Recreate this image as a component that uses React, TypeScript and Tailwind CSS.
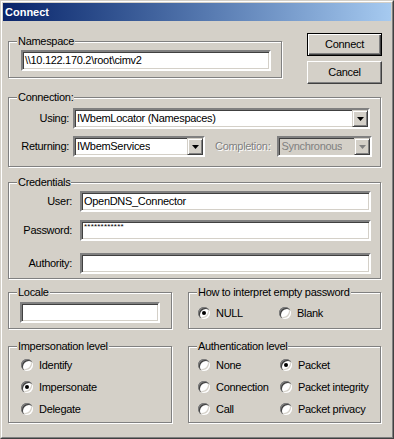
import React from 'react'

const sunken =
  'border-2 border-t-[#808080] border-l-[#808080] border-r-white border-b-white shadow-[inset_1px_1px_0_#404040,inset_-1px_-1px_0_#d4d0c8]'

const Group = ({ label, className, children }: { label: string; className: string; children?: React.ReactNode }) => (
  <div
    className={`relative border border-[#808080] shadow-[inset_1px_1px_0_#fff,1px_1px_0_#fff] ${className}`}
  >
    <span className="absolute top-[-7px] left-[8px] bg-[#d4d0c8] px-[1px] leading-[13px] whitespace-nowrap">
      {label}
    </span>
    {children}
  </div>
)

const TextBox = ({ value, className }: { value?: string; className: string }) => (
  <div className={`${sunken} bg-white h-[21px] flex items-center px-[2px] whitespace-nowrap overflow-hidden ${className}`}>
    {value}
  </div>
)

const Arrow = ({ disabled }: { disabled?: boolean }) => (
  <div className="w-[16px] h-[17px] bg-[#d4d0c8] flex items-center justify-center border border-t-[#d4d0c8] border-l-[#d4d0c8] border-r-[#404040] border-b-[#404040] shadow-[inset_1px_1px_0_#fff,inset_-1px_-1px_0_#808080]">
    <svg width="7" height="4" viewBox="0 0 7 4">
      <path d="M0 0h7L3.5 4z" fill={disabled ? '#808080' : '#000'} />
    </svg>
  </div>
)

const Combo = ({ value, className, disabled }: { value: string; className: string; disabled?: boolean }) => (
  <div
    className={`${sunken} h-[21px] flex items-center justify-between ${disabled ? 'bg-[#d4d0c8] text-[#808080]' : 'bg-white'} ${className}`}
  >
    <span className="pl-[2px] whitespace-nowrap overflow-hidden">{value}</span>
    <Arrow disabled={disabled} />
  </div>
)

const Radio = ({ label, checked }: { label: string; checked?: boolean }) => (
  <div className="h-[22px] flex items-center gap-[6px] whitespace-nowrap">
    <div className="w-[12px] h-[12px] rounded-full bg-white flex items-center justify-center shadow-[inset_1px_1px_0_#808080,inset_2px_2px_0_#404040,inset_-1px_-1px_0_#fff,inset_-2px_-2px_0_#d4d0c8]">
      {checked && <div className="w-[4px] h-[4px] rounded-full bg-black" />}
    </div>
    <span>{label}</span>
  </div>
)

const Button = ({ label, isDefault }: { label: string; isDefault?: boolean }) => (
  <button
    className={`w-[75px] h-[23px] bg-[#d4d0c8] flex items-center justify-center border ${
      isDefault
        ? 'border-black shadow-[inset_1px_1px_0_#fff,inset_-1px_-1px_0_#404040,inset_-2px_-2px_0_#808080]'
        : 'border-t-white border-l-white border-r-[#404040] border-b-[#404040] shadow-[inset_-1px_-1px_0_#808080]'
    }`}
  >
    {label}
  </button>
)

export default function App() {
  return (
    <div className="w-[394px] h-[439px] bg-[#d4d0c8] border border-t-[#d4d0c8] border-l-[#d4d0c8] border-r-[#404040] border-b-[#404040] font-['Liberation_Sans',Arial,sans-serif] text-[11px] tracking-[-0.3px] text-black">
      <div className="h-full border border-t-white border-l-white border-r-[#808080] border-b-[#808080] p-[1px] flex flex-col">
        <div className="h-[18px] bg-gradient-to-r from-[#0a246a] to-[#a6caf0] flex items-center pl-[2px] text-white font-bold tracking-normal">
          Connect
        </div>

        <div className="flex flex-col pl-[5px]">
          {/* row 1 */}
          <div className="mt-[12px] flex items-start h-[50px]">
            <Group label="Namespace" className="mt-[8px] w-[274px] h-[37px] pl-[12px] pt-[8px]">
              <TextBox value="\\10.122.170.2\root\cimv2" className="w-[250px]" />
            </Group>
            <div className="ml-[25px] flex flex-col gap-[5px]">
              <Button label="Connect" isDefault />
              <Button label="Cancel" />
            </div>
          </div>

          {/* connection */}
          <Group label="Connection:" className="mt-[14px] w-[373px] h-[70px] pt-[10px] flex flex-col gap-[7px]">
            <div className="flex items-center">
              <span className="w-[60px] text-right mr-[4px]">Using:</span>
              <Combo value="IWbemLocator (Namespaces)" className="w-[297px]" />
            </div>
            <div className="flex items-center">
              <span className="w-[60px] text-right mr-[4px]">Returning:</span>
              <Combo value="IWbemServices" className="w-[132px]" />
              <span className="ml-[10px] mr-[7px] text-[#808080] [text-shadow:1px_1px_0_#fff]">Completion:</span>
              <Combo value="Synchronous" className="w-[95px]" disabled />
            </div>
          </Group>

          {/* credentials */}
          <Group label="Credentials" className="mt-[15px] w-[373px] h-[97px] pt-[8px] flex flex-col">
            <div className="flex items-center">
              <span className="w-[63px] text-right mr-[8px]">User:</span>
              <TextBox value="OpenDNS_Connector" className="w-[291px]" />
            </div>
            <div className="flex items-center mt-[8px]">
              <span className="w-[63px] text-right mr-[8px]">Password:</span>
              <div className={`${sunken} bg-white h-[21px] w-[291px] px-[2px] text-[8px] leading-[10px] tracking-[0.2px]`}>
                ************
              </div>
            </div>
            <div className="flex items-center mt-[12px]">
              <span className="w-[63px] text-right mr-[8px]">Authority:</span>
              <TextBox className="w-[291px]" />
            </div>
          </Group>

          {/* locale / empty password */}
          <div className="mt-[13px] flex gap-[16px]">
            <Group label="Locale" className="w-[164px] h-[37px] pl-[11px] pt-[9px]">
              <TextBox className="w-[140px]" />
            </Group>
            <Group label="How to interpret empty password" className="w-[193px] h-[37px] pl-[9px] pt-[9px] grid grid-cols-[81px_auto] content-start">
              <Radio label="NULL" checked />
              <Radio label="Blank" />
            </Group>
          </div>

          {/* impersonation / authentication */}
          <div className="mt-[17px] flex gap-[16px]">
            <Group label="Impersonation level" className="w-[164px] h-[77px] pl-[12px] pt-[7px] flex flex-col">
              <Radio label="Identify" />
              <Radio label="Impersonate" checked />
              <Radio label="Delegate" />
            </Group>
            <Group label="Authentication level" className="w-[193px] h-[77px] pl-[9px] pt-[7px] grid grid-cols-[82px_auto] content-start">
              <Radio label="None" />
              <Radio label="Packet" checked />
              <Radio label="Connection" />
              <Radio label="Packet integrity" />
              <Radio label="Call" />
              <Radio label="Packet privacy" />
            </Group>
          </div>
        </div>
      </div>
    </div>
  )
}
